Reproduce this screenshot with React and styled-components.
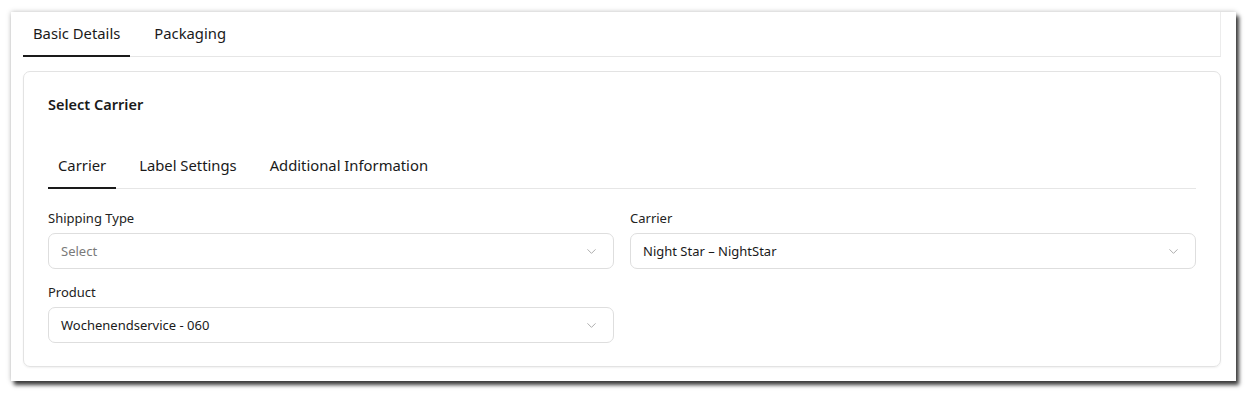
import React, { useState } from 'react';
import styled, { createGlobalStyle } from 'styled-components';
import { ChevronDown } from 'lucide-react';

const GlobalStyle = createGlobalStyle`
  html, body {
    margin: 0;
    padding: 0;
    background: #ffffff;
  }
  body {
    font-family: "Noto Sans", "Open Sans", sans-serif;
    color: #1a1a1a;
  }
`;

const Page = styled.div`
  padding: 12px 0 0 11px;
  min-height: 100vh;
  box-sizing: border-box;
`;

const Window = styled.div`
  width: 1225px;
  height: 369px;
  background: #ffffff;
  box-shadow: 3px 4px 4px rgba(0, 0, 0, 0.75), 0 0 5px rgba(0, 0, 0, 0.25);
  padding: 0 15px 0 12px;
  box-sizing: border-box;
`;

const TabList = styled.div`
  display: flex;
  gap: ${p => p.gap || 12}px;
  border-bottom: 1px solid #e6e6e6;
  border-right: ${p => (p.edge ? '1px solid #ececec' : 'none')};
  height: ${p => p.h}px;
  align-items: stretch;
`;

const Tab = styled.button`
  background: none;
  border: none;
  font-family: inherit;
  font-size: 14.8px;
  color: #1a1a1a;
  padding: 0 10px;
  margin-bottom: -1px;
  cursor: pointer;
  border-bottom: 2px solid ${p => (p.active ? '#1a1a1a' : 'transparent')};
  display: flex;
  align-items: center;
  padding-bottom: ${p => p.pb || 0}px;
`;

const Card = styled.div`
  margin-top: 14px;
  border: 1px solid #e3e3e3;
  border-radius: 7px;
  box-shadow: 0 1px 2px rgba(0, 0, 0, 0.06);
  padding: 22px 24px 24px 24px;
  height: 296px;
  box-sizing: border-box;
`;

const Title = styled.h3`
  margin: 0 0 29px 0;
  font-size: 14.5px;
  font-weight: 600;
  line-height: 20px;
`;

const Grid = styled.div`
  display: grid;
  grid-template-columns: 1fr 1fr;
  column-gap: 16px;
  row-gap: 14px;
  margin-top: 20px;
`;

const Field = styled.div`
  display: flex;
  flex-direction: column;
`;

const Label = styled.label`
  font-size: 13px;
  line-height: 18px;
  color: #222;
  margin-bottom: 6px;
`;

const Select = styled.div`
  height: 36px;
  box-sizing: border-box;
  border: 1px solid #dedede;
  border-radius: 7px;
  display: flex;
  align-items: center;
  justify-content: space-between;
  padding: 0 14px 0 12px;
  font-size: 13px;
  color: ${p => (p.placeholder ? '#7a7a7a' : '#1a1a1a')};
  background: #fff;
`;

const Chevron = styled(ChevronDown)`
  color: #a8a8a8;
`;

const Dropdown = ({ label, value, placeholder }) => (
  <Field>
    <Label>{label}</Label>
    <Select placeholder={!value ? 1 : 0}>
      <span>{value || placeholder}</span>
      <Chevron size={15} strokeWidth={1.5} />
    </Select>
  </Field>
);

const App = () => {
  const [outer, setOuter] = useState('basic');
  const [inner, setInner] = useState('carrier');

  return (
    <Page>
      <GlobalStyle />
      <Window>
        <TabList h={44} gap={14} edge>
          <Tab active={outer === 'basic'} pb={1} onClick={() => setOuter('basic')}>Basic Details</Tab>
          <Tab active={outer === 'packaging'} pb={1} onClick={() => setOuter('packaging')}>Packaging</Tab>
        </TabList>
        <Card>
          <Title>Select Carrier</Title>
          <TabList h={45} gap={13}>
            <Tab active={inner === 'carrier'} onClick={() => setInner('carrier')}>Carrier</Tab>
            <Tab active={inner === 'label'} onClick={() => setInner('label')}>Label Settings</Tab>
            <Tab active={inner === 'info'} onClick={() => setInner('info')}>Additional Information</Tab>
          </TabList>
          <Grid>
            <Dropdown label="Shipping Type" placeholder="Select" />
            <Dropdown label="Carrier" value="Night Star – NightStar" />
            <Dropdown label="Product" value="Wochenendservice - 060" />
          </Grid>
        </Card>
      </Window>
    </Page>
  );
};

export default App;
